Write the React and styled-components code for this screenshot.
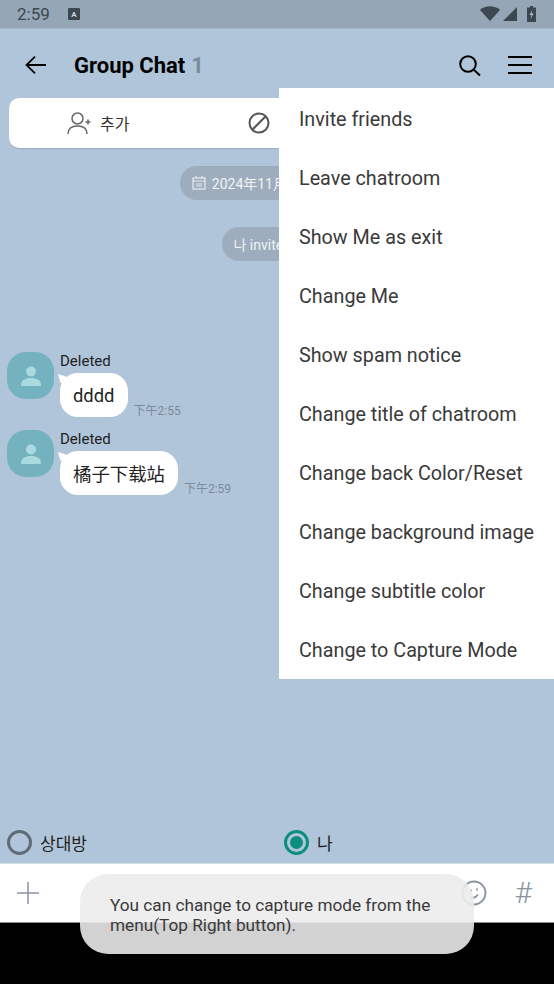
import styled, { createGlobalStyle } from "styled-components";

const GlobalStyle = createGlobalStyle`
  html, body {
    margin: 0;
    padding: 0;
    background: #000;
  }
  * {
    box-sizing: border-box;
  }
`;

const FONT = `Roboto, "Noto Sans CJK KR", "Noto Sans CJK SC", sans-serif`;

const menuItems = [
  "Invite friends",
  "Leave chatroom",
  "Show Me as exit",
  "Change Me",
  "Show spam notice",
  "Change title of chatroom",
  "Change back Color/Reset",
  "Change background image",
  "Change subtitle color",
  "Change to Capture Mode",
];

const messages = [
  { id: 1, text: "dddd", time: "下午2:55" },
  { id: 2, text: "橘子下载站", time: "下午2:59" },
];

const Screen = styled.div`
  position: relative;
  width: 554px;
  height: 984px;
  display: flex;
  flex-direction: column;
  overflow: hidden;
  background: #b0c5da;
  font-family: ${FONT};
`;

const StatusBar = styled.div`
  height: 29px;
  flex: none;
  display: flex;
  align-items: center;
  padding: 0 18px 0 17px;
  background: #95a6b6;
  color: #3d4750;
  border-bottom: 1px solid #a3b5c8;
`;

const Clock = styled.span`
  font-size: 17px;
  width: 51px;
`;

const KeyboardBadge = styled.span`
  width: 12px;
  height: 12px;
  display: flex;
  align-items: center;
  justify-content: center;
  background: #3d4750;
  color: #cfd6dc;
  font-size: 8px;
  font-weight: 700;
  border-radius: 1px;
`;

const StatusIcons = styled.div`
  margin-left: auto;
  display: flex;
  align-items: center;
  gap: 3px;

  svg:last-child {
    margin-left: 7px;
  }
`;

const Header = styled.header`
  height: 69px;
  flex: none;
  display: flex;
  align-items: center;
  padding: 3px 22px 0 25px;
  color: #000;
`;

const Title = styled.h1`
  margin: 0 0 0 28px;
  font-size: 22px;
  font-weight: 700;
  flex: 1;
`;

const Count = styled.span`
  color: #7c8b99;
  margin-left: 6px;
`;

const HeaderIcons = styled.div`
  display: flex;
  align-items: center;
  gap: 27px;
`;

const Burger = styled.div`
  width: 24px;
  height: 18px;
  display: flex;
  flex-direction: column;
  justify-content: space-between;

  span {
    height: 2px;
    background: #000;
  }
`;

const ActionCard = styled.div`
  height: 50px;
  flex: none;
  margin: 0 9px;
  display: grid;
  grid-template-columns: repeat(3, 1fr);
  background: #fff;
  border-radius: 10px;
  box-shadow: 0 1px 1px rgba(70, 90, 110, 0.2);
`;

const ActionButton = styled.div`
  display: flex;
  align-items: center;
  justify-content: center;
  gap: 9px;
  padding-right: ${(p) => p.$inset || 0}px;
  color: #333;
  font-size: 16px;
`;

const Feed = styled.main`
  flex: 1;
  display: flex;
  flex-direction: column;
  padding-top: 18px;
`;

const Pill = styled.div`
  align-self: center;
  height: 34px;
  margin-bottom: ${(p) => p.$gap}px;
  padding: 0 12px;
  display: flex;
  align-items: center;
  gap: 6px;
  white-space: nowrap;
  border-radius: 17px;
  background: #9dadbd;
  color: #f1f4f6;
  font-size: 14px;
`;

const MessageRow = styled.div`
  display: flex;
  align-items: flex-start;
  gap: 6px;
  padding-left: 7px;
  margin-bottom: 13px;
`;

const Avatar = styled.div`
  width: 47px;
  height: 47px;
  display: flex;
  align-items: center;
  justify-content: center;
  background: #74b2bf;
  border-radius: 19px;
`;

const MessageBody = styled.div`
  display: flex;
  flex-direction: column;
`;

const SenderName = styled.span`
  height: 21px;
  line-height: 18px;
  font-size: 15px;
  color: #222;
`;

const BubbleLine = styled.div`
  display: flex;
  align-items: flex-end;
  gap: 6px;
`;

const Bubble = styled.div`
  position: relative;
  height: 44px;
  display: flex;
  align-items: center;
  padding: 0 13px;
  background: #fff;
  border-radius: 18px;
  color: #222;
  font-size: 18.4px;

  &::before {
    content: "";
    position: absolute;
    left: -2px;
    top: 1px;
    width: 10px;
    height: 9px;
    background: #fff;
    clip-path: polygon(0 0, 100% 35%, 100% 100%, 25% 100%);
  }
`;

const Time = styled.span`
  font-size: 12px;
  line-height: 14px;
  color: #7d8a97;
  margin-bottom: -1px;
`;

const SenderPicker = styled.div`
  height: 38px;
  flex: none;
  display: grid;
  grid-template-columns: 277px 1fr;
  align-items: center;
  padding-bottom: 3px;
`;

const SenderOption = styled.label`
  display: flex;
  align-items: center;
  gap: 8px;
  padding-left: 7px;
  font-size: 17px;
  color: #222;
`;

const Radio = styled.span`
  width: 25px;
  height: 25px;
  display: flex;
  align-items: center;
  justify-content: center;
  border-radius: 50%;
  border: 3px solid ${(p) => (p.$checked ? "#0b8f7c" : "#5f6b76")};

  &::after {
    content: "";
    width: 13px;
    height: 13px;
    border-radius: 50%;
    background: ${(p) => (p.$checked ? "#0b8f7c" : "transparent")};
  }
`;

const InputBar = styled.div`
  height: 60px;
  flex: none;
  display: flex;
  align-items: center;
  padding: 0 22px 0 17px;
  background: #fff;
  border-top: 1px solid #d5e0ea;
  border-bottom: 1px solid #8b8b8b;
  color: #8a94a3;
`;

const Spacer = styled.div`
  flex: 1;
`;

const Hash = styled.span`
  margin-left: 28px;
  font-size: 30px;
  font-weight: 300;
  line-height: 1;
`;

const NavBar = styled.div`
  height: 61px;
  flex: none;
  background: #000;
`;

const Menu = styled.ul`
  position: absolute;
  top: 88px;
  right: 0;
  width: 275px;
  margin: 0;
  padding: 1px 0 0;
  list-style: none;
  background: #fff;
`;

const MenuItem = styled.li`
  height: 59px;
  display: flex;
  align-items: center;
  padding: 2px 0 0 20px;
  font-size: 19.75px;
  color: #3a3a3a;
`;

const Toast = styled.div`
  position: absolute;
  left: 80px;
  top: 874px;
  width: 394px;
  height: 80px;
  padding: 21px 30px 0;
  border-radius: 28px;
  background: rgba(236, 236, 236, 0.89);
  color: #3a3a3a;
  font-size: 17.2px;
  line-height: 20px;
`;

function PersonGlyph() {
  return (
    <svg width="24" height="24" viewBox="0 0 24 24" fill="#a9dae0">
      <circle cx="12" cy="7.5" r="5" />
      <path d="M2 21c0-5 4.500-7 10-7s10 2 10 7c0 .6-.4 1-1 1H3c-.6 0-1-.4-1-1z" />
    </svg>
  );
}

export default function App() {
  return (
    <>
      <GlobalStyle />
      <Screen>
        <StatusBar>
          <Clock>2:59</Clock>
          <KeyboardBadge>A</KeyboardBadge>
          <StatusIcons>
            <svg width="20" height="16" viewBox="0 0 20 16" fill="#3d4750">
              <path d="M0 4C5-1 15-1 20 4L10 15z" />
            </svg>
            <svg width="14" height="14" viewBox="0 0 14 14" fill="#3d4750">
              <path d="M14 0v14H0z" />
            </svg>
            <svg width="9" height="16" viewBox="0 0 9 16">
              <path d="M3 0h3v1.500h3V16H0V1.500h3z" fill="#3d4750" />
              <path d="M5.500 4L2.500 9h2l-1 4 3-5.500h-2z" fill="#b8c3cc" />
            </svg>
          </StatusIcons>
        </StatusBar>

        <Header>
          <svg width="21" height="18" viewBox="0 0 21 18" fill="none" stroke="#000" strokeWidth="1.800">
            <path d="M21 9H1.500M10 .7L1.500 9l8.500 8.300" />
          </svg>
          <Title>
            Group Chat<Count>1</Count>
          </Title>
          <HeaderIcons>
            <svg width="22" height="21" viewBox="0 0 22 21" fill="none" stroke="#000" strokeWidth="2">
              <circle cx="9" cy="9" r="7.800" />
              <path d="M14.500 14.500L21 20.500" />
            </svg>
            <Burger>
              <span />
              <span />
              <span />
            </Burger>
          </HeaderIcons>
        </Header>

        <ActionCard>
          <ActionButton>
            <svg width="24" height="22" viewBox="0 0 24 22" fill="none" stroke="#666" strokeWidth="1.500">
              <circle cx="10.500" cy="6.500" r="5.500" />
              <path d="M1 22c0-5.500 4-8 9.500-8s9.500 2.500 9.500 8" />
              <path d="M18.500 10h5M21 7.500v5" />
            </svg>
            추가
          </ActionButton>
          <ActionButton $inset={36}>
            <svg width="22" height="22" viewBox="0 0 22 22" fill="none" stroke="#555" strokeWidth="2">
              <circle cx="11" cy="11" r="9.500" />
              <path d="M4.500 17.500L17.500 4.500" />
            </svg>
          </ActionButton>
        </ActionCard>

        <Feed>
          <Pill $gap={27}>
            <svg width="14" height="14" viewBox="0 0 14 14" fill="none" stroke="#e8ecef" strokeWidth="1.200">
              <rect x="1" y="2" width="12" height="11" />
              <path d="M1 5h12M4 0v2M10 0v2M4 8h6M4 10h6" />
            </svg>
            2024年11月20日 星期三
          </Pill>
          <Pill $gap={91}>나 invited you.</Pill>
          {messages.map((m) => (
            <MessageRow key={m.id}>
              <Avatar>
                <PersonGlyph />
              </Avatar>
              <MessageBody>
                <SenderName>Deleted</SenderName>
                <BubbleLine>
                  <Bubble>{m.text}</Bubble>
                  <Time>{m.time}</Time>
                </BubbleLine>
              </MessageBody>
            </MessageRow>
          ))}
        </Feed>

        <SenderPicker>
          <SenderOption>
            <Radio />
            상대방
          </SenderOption>
          <SenderOption>
            <Radio $checked />
            나
          </SenderOption>
        </SenderPicker>

        <InputBar>
          <svg width="22" height="22" viewBox="0 0 22 22" stroke="#8a94a3" strokeWidth="1.500">
            <path d="M11 0v22M0 11h22" />
          </svg>
          <Spacer />
          <svg width="26" height="26" viewBox="0 0 26 26" fill="none" stroke="#8a94a3" strokeWidth="1.800">
            <circle cx="13" cy="13" r="11.500" />
            <path d="M9 17c3 1.500 6 .5 8-2.500" />
            <path d="M10 9.500v2M16 8.500v2" />
          </svg>
          <Hash>#</Hash>
        </InputBar>

        <NavBar />

        <Menu>
          {menuItems.map((item) => (
            <MenuItem key={item}>{item}</MenuItem>
          ))}
        </Menu>

        <Toast>You can change to capture mode from the menu(Top Right button).</Toast>
      </Screen>
    </>
  );
}
